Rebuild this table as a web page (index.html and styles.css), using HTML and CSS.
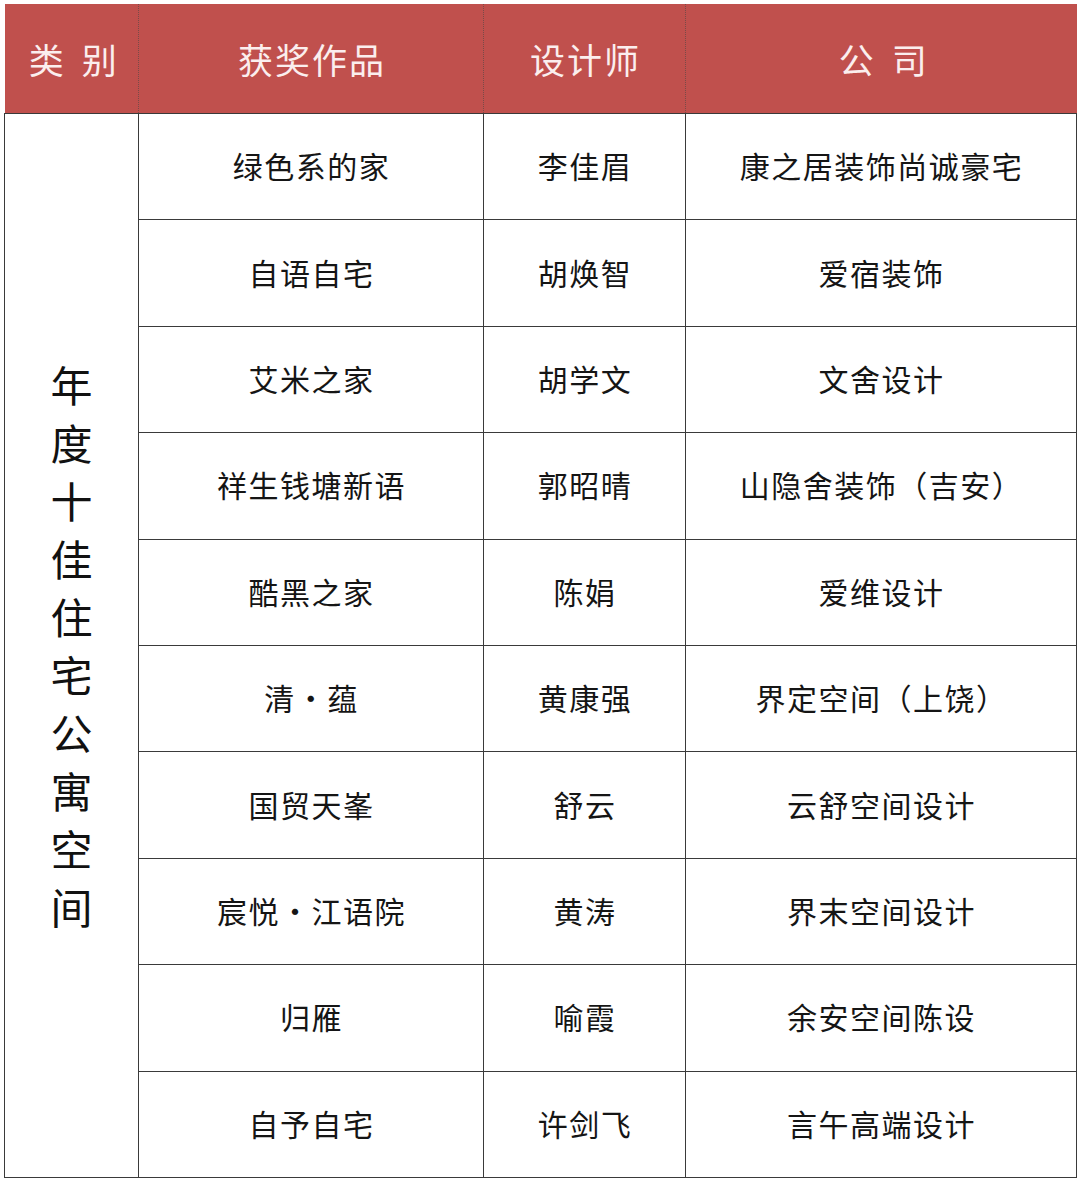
FILE: index.html
```html
<!DOCTYPE html>
<html lang="zh">
<head>
<meta charset="utf-8">
<link rel="stylesheet" href="styles.css">
</head>
<body>
<table class="awards">
  <colgroup>
    <col class="c-cat"><col class="c-work"><col class="c-des"><col class="c-co">
  </colgroup>
  <thead>
    <tr>
      <th class="spaced">类 别</th>
      <th>获奖作品</th>
      <th>设计师</th>
      <th class="spaced">公 司</th>
    </tr>
  </thead>
  <tbody>
    <tr><td class="cat" rowspan="10"><div class="vert">年度十佳住宅公寓空间</div></td><td>绿色系的家</td><td>李佳眉</td><td>康之居装饰尚诚豪宅</td></tr>
    <tr><td>自语自宅</td><td>胡焕智</td><td>爱宿装饰</td></tr>
    <tr><td>艾米之家</td><td>胡学文</td><td>文舍设计</td></tr>
    <tr><td>祥生钱塘新语</td><td>郭昭晴</td><td>山隐舍装饰（吉安）</td></tr>
    <tr><td>酷黑之家</td><td>陈娟</td><td>爱维设计</td></tr>
    <tr><td>清·蕴</td><td>黄康强</td><td>界定空间（上饶）</td></tr>
    <tr><td>国贸天峯</td><td>舒云</td><td>云舒空间设计</td></tr>
    <tr><td>宸悦·江语院</td><td>黄涛</td><td>界末空间设计</td></tr>
    <tr><td>归雁</td><td>喻霞</td><td>余安空间陈设</td></tr>
    <tr><td>自予自宅</td><td>许剑飞</td><td>言午高端设计</td></tr>
  </tbody>
</table>
</body>
</html>
```
FILE: styles.css
```css
html, body {
  margin: 0;
  padding: 0;
  background: #ffffff;
}
body {
  padding: 4px 0 0 4px;
  font-family: "Noto Sans CJK SC", "Noto Sans", sans-serif;
}
.awards {
  border-collapse: collapse;
  table-layout: fixed;
  width: 1072px;
  color: #151515;
}
.c-cat { width: 134px; }
.c-work { width: 345px; }
.c-des { width: 202px; }
.c-co { width: 391px; }
.awards th {
  background: #c0504d;
  color: #fbeeee;
  font-weight: 400;
  font-size: 35px;
  height: 109px;
  padding: 0 0 0 2px;
  text-align: center;
  letter-spacing: 2px;
  border-left: 1px dotted #7a4a48;
  border-right: 1px dotted #7a4a48;
}
.awards th.spaced {
  letter-spacing: 5px;
  padding-left: 8px;
}
.awards th:first-child { border-left: none; }
.awards th:last-child { border-right: none; }
.awards td {
  border: 1.5px solid #3a3a3a;
  height: 102.4px;
  padding: 0 0 3px 1px;
  text-align: center;
  font-size: 30px;
  letter-spacing: 1.5px;
}
.awards td.cat {
  vertical-align: middle;
  padding: 0;
}
.vert {
  width: 1em;
  margin: 0 auto;
  font-size: 42px;
  line-height: 58px;
  letter-spacing: 0;
  word-break: break-all;
  color: #111;
}
```
